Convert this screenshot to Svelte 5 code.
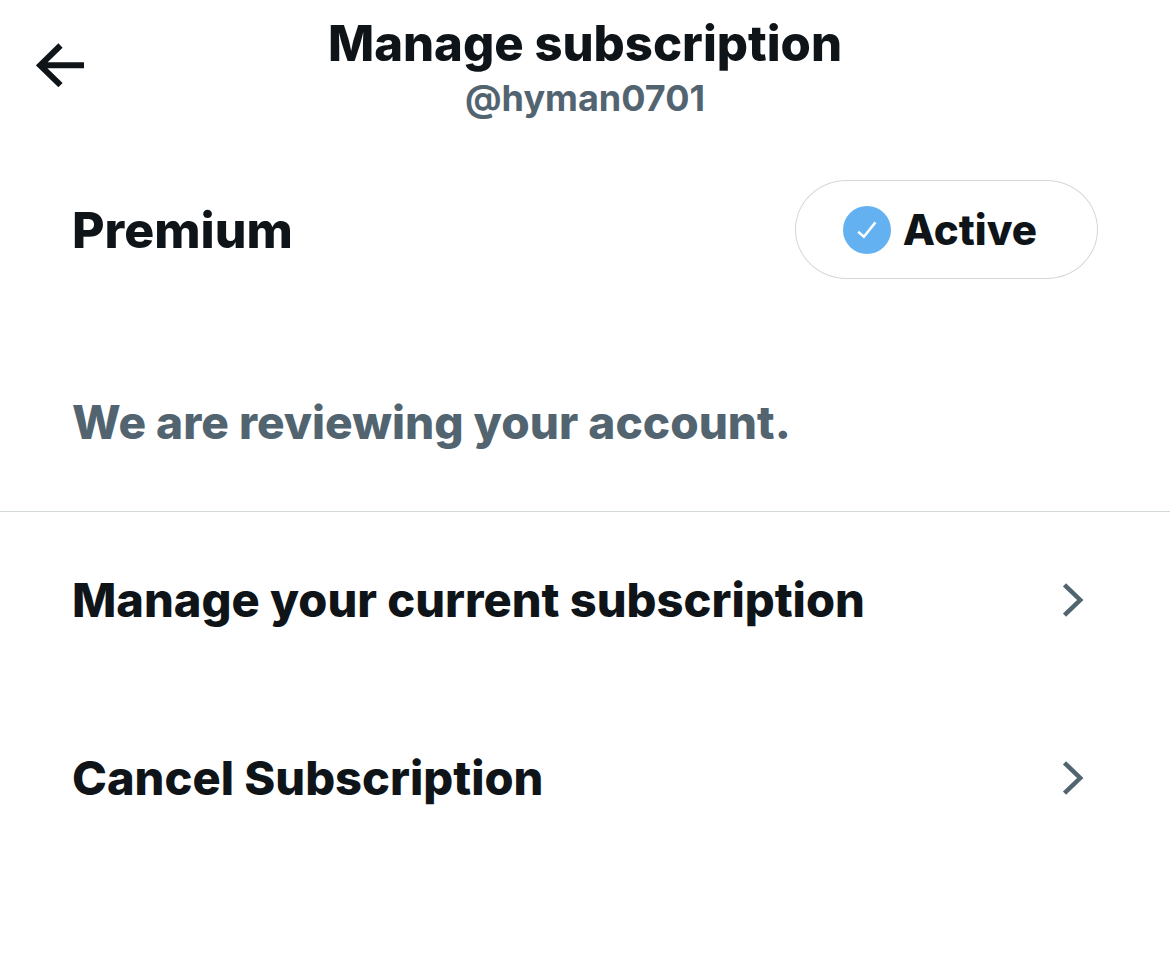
<script>
  const account = '@hyman0701';
  const actions = ['Manage your current subscription', 'Cancel Subscription'];
</script>

<main>
  <header>
    <button class="back" aria-label="Back">
      <svg width="48" height="44" viewBox="0 0 48 44"><path d="M24.5 2.5 4.2 22.3l20.3 19.8M4 22.3h44" /></svg>
    </button>
    <div class="heading">
      <h1>Manage subscription</h1>
      <p>{account}</p>
    </div>
  </header>

  <section>
    <div class="plan">
      <h2>Premium</h2>
      <div class="status">
        <svg width="48" height="48" viewBox="0 0 48 48"><circle cx="24" cy="24" r="24" /><path d="m15.2 25.8 5.7 5L32.4 16.4" /></svg>
        <span>Active</span>
      </div>
    </div>
    <p class="review">We are reviewing your account.</p>
  </section>

  <nav>
    {#each actions as action}
      <button class="row">
        <span>{action}</span>
        <svg width="22" height="34" viewBox="0 0 22 34"><path d="m2.5 1.8 15.7 15.2L2.5 32.2" /></svg>
      </button>
    {/each}
  </nav>
</main>

<style>
  :global(body) { background: #fff; }
  main {
    font-family: Inter, "Liberation Sans", sans-serif;
    font-weight: 800;
    color: #0f1419;
  }
  h1, h2, p { margin: 0; font-weight: inherit; }
  button { border: 0; padding: 0; background: none; font: inherit; color: inherit; cursor: pointer; }
  svg { display: block; flex: none; fill: none; }
  header {
    display: grid;
    grid-template-columns: 48px 1fr 48px;
    padding: 12px 36px 0;
    min-height: 132px;
    box-sizing: border-box;
  }
  .back { align-self: start; padding-top: 31px; }
  .back path { stroke: #0f1419; stroke-width: 6; }
  .heading { text-align: center; }
  h1 { font-size: 49px; line-height: 64px; }
  .heading p { font-size: 36px; line-height: 44px; font-weight: 700; color: #536471; }
  section { padding: 48px 72px 56px; border-bottom: 1px solid #d3d8db; }
  .plan { display: flex; align-items: center; justify-content: space-between; }
  h2 { font-size: 50px; line-height: 64px; }
  .status {
    display: flex;
    align-items: center;
    gap: 12px;
    padding: 24px 60px 24px 47px;
    border: 1px solid #d3d8db;
    border-radius: 52px / 50px;
    font-size: 42px;
    line-height: 49px;
  }
  .status circle { fill: #63b1f1; }
  .status path { stroke: #fff; stroke-width: 2.5; }
  .review { margin-top: 111px; padding-bottom: 1px; font-size: 46px; line-height: 64px; color: #536471; }
  .row {
    display: flex;
    align-items: center;
    justify-content: space-between;
    width: 100%;
    padding: 56px 86px 58px 72px;
    font-size: 47px;
    line-height: 64px;
    text-align: left;
  }
  .row path { stroke: #536471; stroke-width: 4.5; }
</style>
